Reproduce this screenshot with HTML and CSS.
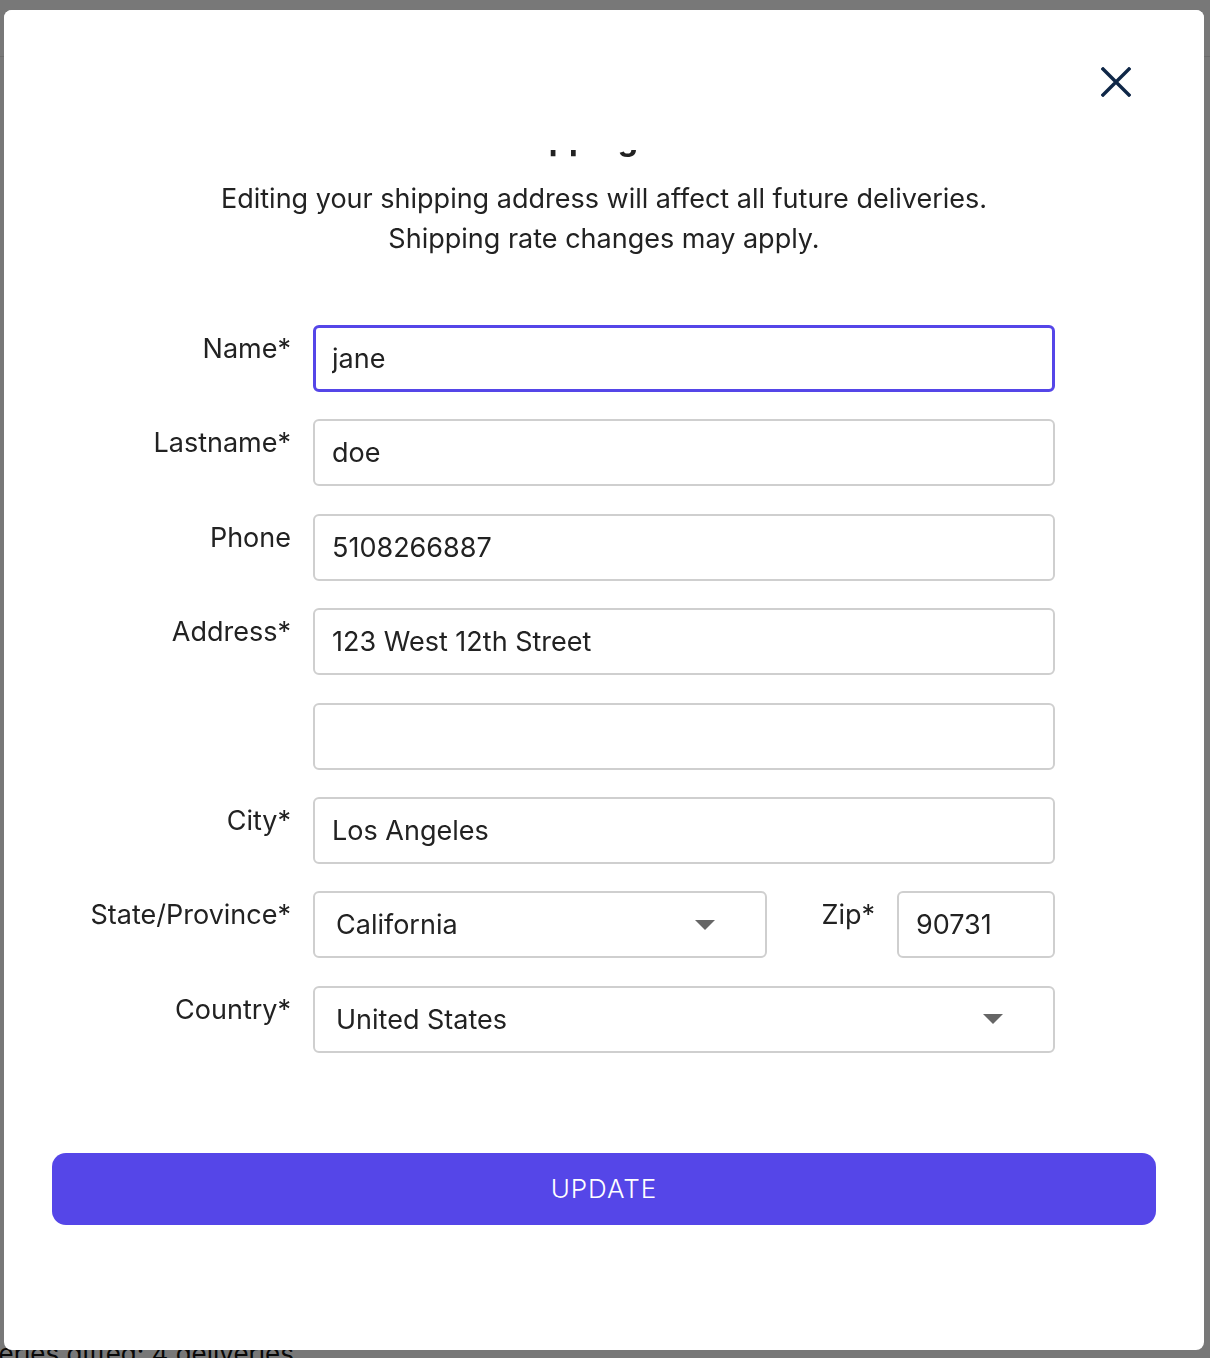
FILE: index.html
```html
<!DOCTYPE html>
<html lang="en">
<head>
<meta charset="utf-8">
<title>Edit Shipping Address</title>
<link rel="stylesheet" href="styles.css">
</head>
<body>
<div class="page">
  <div class="page-top"></div>
  <div class="page-main">
    <div class="page-edge-text">Deliveries gifted: 4 deliveries</div>
  </div>
</div>

<div class="overlay">
  <div class="modal" role="dialog" aria-labelledby="modal-title">
    <div class="modal-header">
      <button class="close" aria-label="Close">
        <svg width="30" height="30" viewBox="0 0 30 30" aria-hidden="true">
          <path d="M2 2 L28 28 M28 2 L2 28" stroke="#0f2747" stroke-width="3.4" stroke-linecap="square" fill="none"/>
        </svg>
      </button>
    </div>
    <div class="modal-body">
      <h2 id="modal-title" class="title">Edit Shipping Address</h2>
      <p class="subtitle">Editing your shipping address will affect all future deliveries.<br>Shipping rate changes may apply.</p>

      <form class="form">
        <label class="label" for="f-name">Name*</label>
        <input class="input focused" id="f-name" type="text" value="jane">

        <label class="label" for="f-last">Lastname*</label>
        <input class="input" id="f-last" type="text" value="doe">

        <label class="label" for="f-phone">Phone</label>
        <input class="input" id="f-phone" type="text" value="5108266887">

        <label class="label" for="f-addr">Address*</label>
        <input class="input" id="f-addr" type="text" value="123 West 12th Street">

        <span class="label"></span>
        <input class="input" id="f-addr2" type="text" value="" aria-label="Address line 2">

        <label class="label" for="f-city">City*</label>
        <input class="input" id="f-city" type="text" value="Los Angeles">

        <span class="label">State/Province*</span>
        <div class="split">
          <div class="select select-state">
            <span class="select-value">California</span>
            <svg class="caret" width="20" height="10" viewBox="0 0 20 10" aria-hidden="true"><path d="M0 0 H20 L10 10 Z" fill="#666"/></svg>
          </div>
          <label class="label zip-label" for="f-zip">Zip*</label>
          <input class="input zip" id="f-zip" type="text" value="90731">
        </div>

        <span class="label">Country*</span>
        <div class="select">
          <span class="select-value">United States</span>
          <svg class="caret" width="20" height="10" viewBox="0 0 20 10" aria-hidden="true"><path d="M0 0 H20 L10 10 Z" fill="#666"/></svg>
        </div>
      </form>

      <button class="update" type="button">UPDATE</button>
    </div>
  </div>
</div>
</body>
</html>
```

FILE: styles.css
```css
* { box-sizing: border-box; }

html, body {
  margin: 0;
  padding: 0;
  height: 100%;
}

body {
  font-family: "Inter", "Noto Sans", "Liberation Sans", sans-serif;
  color: #222;
  background: #fff;
  overflow: hidden;
}

/* background page */
.page {
  height: 100%;
  display: flex;
  flex-direction: column;
}
.page-top {
  height: 57px;
  border-bottom: 1px solid #e6e6e6;
  flex: none;
}
.page-main {
  flex: 1;
  display: flex;
  flex-direction: column;
  justify-content: flex-end;
}
.page-edge-text {
  font-size: 26px;
  line-height: 28px;
  color: #111;
  margin-left: -62px;
  margin-bottom: -10px;
  white-space: nowrap;
}

/* overlay + modal */
.overlay {
  position: fixed;
  inset: 0;
  background: rgba(0, 0, 0, 0.53);
}

.modal {
  position: absolute;
  left: 4px;
  top: 10px;
  width: 1200px;
  height: 1340px;
  background: #fff;
  border-radius: 8px;
  display: flex;
  flex-direction: column;
  overflow: hidden;
}

.modal-header {
  height: 140px;
  flex: none;
  position: relative;
  background: #fff;
  z-index: 1;
}

.close {
  position: absolute;
  top: 57px;
  right: 73px;
  width: 30px;
  height: 30px;
  padding: 0;
  border: 0;
  background: none;
  cursor: pointer;
  display: block;
}
.close svg { display: block; }

.modal-body {
  flex: 1;
  overflow: hidden;
  display: flex;
  flex-direction: column;
}

.title {
  margin: -31px 0 0;
  height: 40px;
  line-height: 40px;
  font-size: 32px;
  font-weight: 700;
  text-align: center;
  color: #222;
}

.subtitle {
  margin: 20px 0 0;
  font-size: 27px;
  line-height: 40px;
  text-align: center;
  color: #222;
}

.form {
  margin: 66px 0 0 9px;
  display: grid;
  grid-template-columns: 278px 742px;
  column-gap: 22px;
  row-gap: 27.4px;
}

.label {
  font-size: 27px;
  line-height: 30px;
  padding-top: 9px;
  text-align: right;
  color: #222;
  white-space: nowrap;
}

.input {
  height: 67px;
  width: 100%;
  border: 2px solid #cfcfcf;
  border-radius: 6px;
  padding: 0 17px;
  font-family: inherit;
  font-size: 27px;
  color: #222;
  background: #fff;
  outline: none;
}
.input.focused {
  border: 3px solid #5546e8;
  padding: 0 16px;
}

.split {
  display: flex;
  align-items: flex-start;
}
.select {
  height: 67px;
  border: 2px solid #cfcfcf;
  border-radius: 6px;
  padding: 0 50px 0 21px;
  display: flex;
  align-items: center;
  justify-content: space-between;
  font-size: 27px;
  color: #222;
  background: #fff;
}
.select-state {
  width: 454px;
  flex: none;
}
.caret { display: block; }

.zip-label {
  flex: 1;
  padding-right: 22px;
}
.zip {
  width: 158px;
  flex: none;
}

.update {
  margin: 100px 0 0 48px;
  width: 1104px;
  height: 72px;
  border: 0;
  border-radius: 14px;
  background: #5546e8;
  color: #fff;
  font-family: inherit;
  font-size: 26px;
  font-weight: 300;
  letter-spacing: 1px;
  cursor: pointer;
}
```
